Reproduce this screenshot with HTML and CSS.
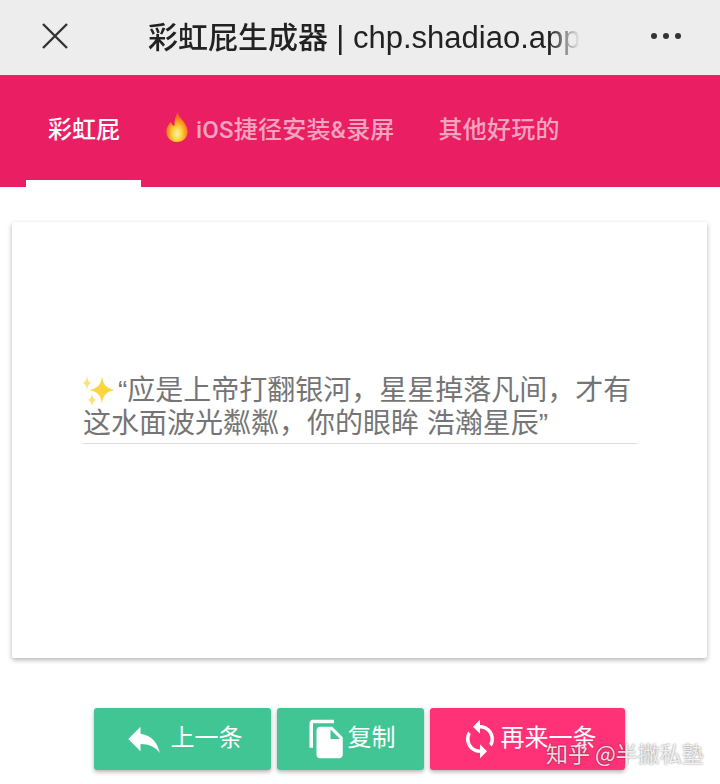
FILE: index.html
```html
<!DOCTYPE html>
<html lang="zh-CN">
<head>
  <meta charset="UTF-8" />
  <meta name="viewport" content="width=device-width, initial-scale=1.0"/>
  <title>彩虹屁生成器</title>
  <link rel="stylesheet" href="styles.css">
</head>
<body>

  <header class="topbar">
    <svg class="close-icon" viewBox="0 0 28 28"><path d="M2 2 L26 26 M26 2 L2 26"/></svg>
    <div class="page-title">彩虹屁生成器 <span class="domain">| chp.shadiao.app</span></div>
    <div class="more"><i></i><i></i><i></i></div>
  </header>

  <nav class="tabs">
    <a class="tab active">彩虹屁</a>
    <a class="tab">
      <svg class="fire" viewBox="0 0 26 34">
        <defs>
          <radialGradient id="flame" cx="50%" cy="72%" r="65%">
            <stop offset="0" stop-color="#fff6b0"/>
            <stop offset="0.35" stop-color="#ffd23c"/>
            <stop offset="0.7" stop-color="#fb8a1e"/>
            <stop offset="1" stop-color="#f0502a"/>
          </radialGradient>
        </defs>
        <path fill="url(#flame)" d="M14 0 C15 7 24 12 25 21 C25.500 29 20 34 13 34 C6 34 1 29 1 22 C1 17 4 14 6 11 C7 14 8 15 10 16 C10 10 11 5 14 0 Z"/>
      </svg>iOS捷径安装&amp;录屏
    </a>
    <a class="tab">其他好玩的</a>
  </nav>

  <main class="content">
    <section class="card">
      <div class="quote">
        <svg class="sparkles" viewBox="0 0 35 32">
          <path fill="#fbd63f" d="M19 2 C20 11 23 14 31.500 16 C23 18 20 21 19 30 C18 21 15 18 6.500 16 C15 14 18 11 19 2 Z"/>
          <path fill="#fbe17a" d="M4 1 C4.500 6 5.500 8 8 9 C5.500 10 4.500 12 4 17 C3.500 12 2.500 10 0 9 C2.500 8 3.500 6 4 1 Z"/>
          <path fill="#fbe17a" d="M9 19 C9.500 23 10.500 25 13 26 C10.500 27 9.500 29 9 33 C8.500 29 7.500 27 5 26 C7.500 25 8.500 23 9 19 Z"/>
        </svg>“应是上帝打翻银河，星星掉落凡间，才有这水面波光粼粼，你的眼眸 浩瀚星辰”
      </div>
    </section>

    <div class="actions">
      <button class="btn btn-prev">
        <svg viewBox="0 0 24 24"><path d="M10 9V5l-7 7 7 7v-4.100c5 0 8.500 1.600 11 5.100-1-5-4-10-11-11z"/></svg>
        <span class="prev-label">上一条</span>
      </button>
      <button class="btn btn-copy">
        <svg viewBox="0 0 24 24"><path d="M16 1H4c-1.100 0-2 .9-2 2v14h2V3h12V1zm-1 4l6 6v10c0 1.100-.9 2-2 2H7.990C6.890 23 6 22.100 6 21l.01-14c0-1.100.89-2 1.990-2h7zm-1 7h5.500L14 6.500V12z"/></svg>
        <span>复制</span>
      </button>
      <button class="btn btn-next">
        <svg viewBox="0 0 24 24"><path d="M12 4V1L8 5l4 4V6c3.310 0 6 2.690 6 6 0 1.010-.25 1.970-.7 2.800l1.460 1.460C19.540 15.030 20 13.570 20 12c0-4.420-3.580-8-8-8zm0 14c-3.310 0-6-2.690-6-6 0-1.010.25-1.970.7-2.800L5.240 7.740C4.460 8.970 4 10.430 4 12c0 4.420 3.580 8 8 8v3l4-4-4-4v3z"/></svg>
        <span>再来一条</span>
      </button>
    </div>
  </main>

  <div class="watermark">知乎 @半撇私塾</div>

</body>
</html>
```
FILE: styles.css
```css
* { box-sizing: border-box; margin: 0; padding: 0; }
html, body { height: 100%; overflow: hidden; background: #fff; }
body { font-family: "Liberation Sans", "Noto Sans CJK SC", sans-serif; position: relative; }

/* top bar */
.topbar { height: 75px; background: #ededed; display: flex; align-items: center; padding: 0 39px 3px 41px; }
.close-icon { width: 28px; height: 28px; flex: none; }
.close-icon path { stroke: #333; stroke-width: 2.4; fill: none; }
.page-title { width: 432px; margin: 0 0 2px 79px; font-size: 30px; font-weight: 500; color: #222; white-space: nowrap; overflow: hidden;
  -webkit-mask-image: linear-gradient(to right, #000 93%, transparent 100%); mask-image: linear-gradient(to right, #000 93%, transparent 100%); }
.domain { font-size: 31px; }
.more { margin-left: auto; display: flex; gap: 6px; }
.more i { width: 6px; height: 6px; border-radius: 50%; background: #333; }

/* tabs */
.tabs { height: 112px; background: #e91e63; display: flex; padding-left: 26px; font-family: Roboto, "Noto Sans CJK SC", sans-serif; box-shadow: inset 0 1px 0 #c43a68; }
.tab { height: 112px; padding: 0 20px 8px 24px; display: flex; align-items: center; font-size: 24px; font-weight: 500; letter-spacing: 0.2px; color: rgba(255,255,255,0.6); white-space: nowrap; }
.tab.active { color: #fff; border-bottom: 7px solid #fff; padding: 0 21px 1px 22px; letter-spacing: 0; }
.fire { width: 24px; height: 30px; margin-right: 7px; }

/* card */
.content { padding: 35px 13px 0 12px; }
.card { height: 436px; padding: 152px 70px 0 71px; background: #fff; box-shadow: 0 2px 5px rgba(0,0,0,0.3); border-radius: 2px; }
.quote { font-family: "Liberation Sans", "Noto Sans CJK SC", sans-serif; font-size: 28px; line-height: 33px; color: #757575; height: 70px; border-bottom: 1px solid #ddd; }
.sparkles { width: 35px; height: 32px; vertical-align: -6px; }

/* buttons */
.actions { margin-top: 50px; display: flex; justify-content: center; gap: 6px; }
.btn { height: 62px; border: none; border-radius: 3px; color: #fff; display: flex; align-items: center; justify-content: center; font-family: Roboto, "Noto Sans CJK SC", sans-serif; font-size: 24px; box-shadow: 0 2px 4px rgba(0,0,0,0.3); }
.btn svg { width: 42px; height: 42px; fill: #fff; flex: none; }
.btn span { margin-bottom: 7px; }
.btn-prev, .btn-copy { background: #42c595; }
.btn-prev { width: 177px; }
.prev-label { margin-left: 6px; }
.btn-copy { width: 147px; }
.btn-next { width: 195px; background: #ff3278; }

/* watermark */
.watermark { position: absolute; left: 546px; top: 736px; font-family: "Noto Sans CJK SC", sans-serif; font-size: 22px; line-height: 32px; color: rgba(255,255,255,0.85); text-shadow: 0 0 2px rgba(0,0,0,0.55); white-space: nowrap; }
```
